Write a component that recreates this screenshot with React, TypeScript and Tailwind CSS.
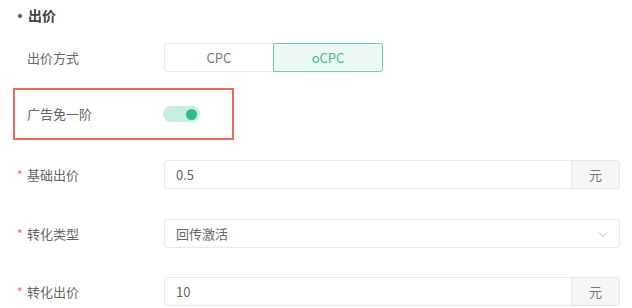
import React from "react";

const font = { fontFamily: '"Noto Sans CJK SC", "Noto Sans", sans-serif' };

function Label({ text, required }: { text: string; required?: boolean }) {
  return (
    <div className="w-[137px] shrink-0 flex items-center text-[13px] text-[#666]">
      {required ? <span className="text-[#e86a6a] w-[10px] -ml-[10px] text-[12px]">*</span> : null}
      <span>{text}</span>
    </div>
  );
}

export default function App() {
  return (
    <div className="w-[632px] h-[308px] bg-white overflow-hidden pl-[13px]" style={font}>
      <div className="pt-[4px] pl-[5px] h-[26px] flex items-center text-[14px] font-bold text-[#444]">
        <div className="w-[4px] h-[4px] rounded-full bg-[#555] mr-[6px] mt-[1px]" />
        <span>出价</span>
      </div>
      <div className="mt-[17px] pl-[14px] flex items-center h-[29px]">
        <Label text="出价方式" />
        <div className="flex h-[29px]">
          <div className="w-[110px] h-full flex items-center justify-center border border-[#e8e8e8] rounded-l-[3px] text-[13px] text-[#777]">
            CPC
          </div>
          <div className="w-[110px] h-full flex items-center justify-center border border-[#72cdae] bg-[#ecf9f4] rounded-r-[3px] text-[13px] text-[#3dba91] -ml-px">
            oCPC
          </div>
        </div>
      </div>
      <div className="mt-[16px] w-[221px] h-[52px] border-2 border-[#ef6a5a] pl-[12px] flex items-center">
        <Label text="广告免一阶" />
        <div className="-ml-[1px] w-[37px] h-[16px] rounded-full bg-[#c8eede] flex items-center justify-end pr-[3px]">
          <div className="w-[11px] h-[11px] rounded-full bg-[#2dbb8b]" />
        </div>
      </div>
      <div className="mt-[20px] pl-[14px] flex items-center h-[29px]">
        <Label text="基础出价" required />
        <div className="flex h-[29px] w-[456px]">
          <div className="flex-1 border border-[#e8e8e8] rounded-l-[3px] flex items-center pl-[11px] text-[13px] text-[#666]">
            0.5
          </div>
          <div className="w-[49px] border border-[#e8e8e8] -ml-px bg-[#f6f6f8] rounded-r-[3px] flex items-center justify-center text-[13px] text-[#777]">
            元
          </div>
        </div>
      </div>
      <div className="mt-[30px] pl-[14px] flex items-center h-[29px]">
        <Label text="转化类型" required />
        <div className="flex h-[29px] w-[456px] border border-[#e8e8e8] rounded-[3px] items-center pl-[11px] pr-[10px] justify-between text-[13px] text-[#666]">
          <span>回传激活</span>
          <svg width="12" height="12" viewBox="0 0 12 12" fill="none">
            <path d="M2 4.5L6 8.5L10 4.5" stroke="#bbb" strokeWidth="1" />
          </svg>
        </div>
      </div>
      <div className="mt-[29px] pl-[14px] flex items-center h-[29px]">
        <Label text="转化出价" required />
        <div className="flex h-[29px] w-[456px]">
          <div className="flex-1 border border-[#e8e8e8] rounded-l-[3px] flex items-center pl-[11px] text-[13px] text-[#666]">
            10
          </div>
          <div className="w-[49px] border border-[#e8e8e8] -ml-px bg-[#f6f6f8] rounded-r-[3px] flex items-center justify-center text-[13px] text-[#777]">
            元
          </div>
        </div>
      </div>
    </div>
  );
}
